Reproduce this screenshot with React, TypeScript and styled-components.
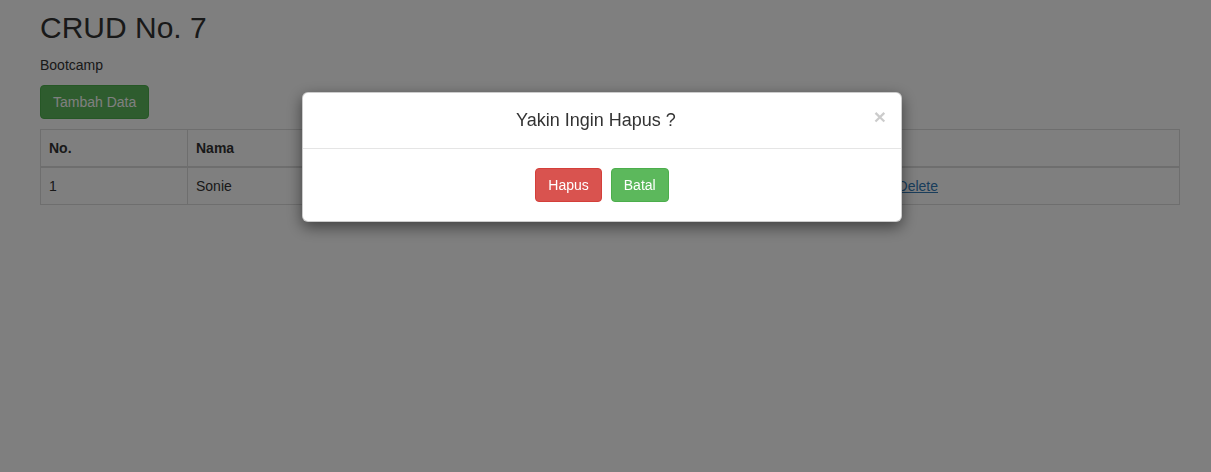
import React from "react";
import styled, { createGlobalStyle } from "styled-components";

const Global = createGlobalStyle`
  html, body { margin: 0; padding: 0; }
  body {
    font-family: "Liberation Sans", Arial, Helvetica, sans-serif;
    font-size: 14px;
    line-height: 1.42857143;
    color: #333;
    background: #fff;
  }
  * { box-sizing: border-box; }
`;

const Container = styled.div`
  width: 1140px;
  margin-left: 40px;
`;

const Title = styled.h1`
  font-size: 30px;
  font-weight: 500;
  line-height: 33px;
  margin: 11px 0 11px;
`;

const Sub = styled.p`
  margin: 0 0 10px;
`;

const Btn = styled.button<{ $variant: "success" | "danger" }>`
  display: inline-block;
  font-family: inherit;
  font-size: 14px;
  line-height: 20px;
  padding: 6px 12px;
  border-radius: 4px;
  border: 1px solid ${(p) => (p.$variant === "success" ? "#4cae4c" : "#d43f3a")};
  background: ${(p) => (p.$variant === "success" ? "#5cb85c" : "#d9534f")};
  color: #fff;
  cursor: pointer;
`;

const Table = styled.table`
  width: 100%;
  margin-top: 10px;
  border-collapse: collapse;
  border: 1px solid #ddd;
  th, td {
    border: 1px solid #ddd;
    padding: 8px;
    text-align: left;
    line-height: 1.42857143;
    vertical-align: top;
  }
  th { border-bottom-width: 2px; font-weight: bold; }
`;

const Link = styled.a`
  color: #337ab7;
  text-decoration: underline;
`;

const Backdrop = styled.div`
  position: fixed;
  inset: 0;
  background: rgba(0, 0, 0, 0.5);
`;

const Overlay = styled.div`
  position: fixed;
  inset: 0;
  display: flex;
  justify-content: center;
  align-items: flex-start;
  padding-top: 92px;
  padding-right: 7px;
`;

const Dialog = styled.div`
  width: 600px;
  background: #fff;
  border: 1px solid rgba(0, 0, 0, 0.2);
  border-radius: 6px;
  box-shadow: 0 5px 15px rgba(0, 0, 0, 0.5);
`;

const Header = styled.div`
  display: flex;
  align-items: flex-start;
  padding: 15px;
  border-bottom: 1px solid #e5e5e5;
`;

const ModalTitle = styled.h4`
  flex: 1;
  margin: 0;
  font-size: 18px;
  font-weight: 500;
  line-height: 25px;
  text-align: center;
`;

const Close = styled.button`
  margin-top: -2px;
  padding: 0;
  border: 0;
  background: transparent;
  font-family: inherit;
  font-size: 21px;
  font-weight: bold;
  line-height: 1;
  color: #000;
  opacity: 0.2;
  cursor: pointer;
`;

const Body = styled.div`
  padding: 19px 15px 19px;
  display: flex;
  justify-content: center;
  gap: 9px;
`;

export default function App() {
  return (
    <>
      <Global />
      <Container>
        <Title>CRUD No. 7</Title>
        <Sub>Bootcamp</Sub>
        <Btn $variant="success">Tambah Data</Btn>
        <Table>
          <thead>
            <tr>
              <th style={{ width: 147 }}>No.</th>
              <th style={{ width: 300 }}>Nama</th>
              <th style={{ width: 366 }}>Alamat</th>
              <th>Aksi</th>
            </tr>
          </thead>
          <tbody>
            <tr>
              <td>1</td>
              <td>Sonie</td>
              <td>Jakarta</td>
              <td>
                <Link href="#">Edit</Link> | <Link href="#">Delete</Link>
              </td>
            </tr>
          </tbody>
        </Table>
      </Container>
      <Backdrop />
      <Overlay>
        <Dialog>
          <Header>
            <ModalTitle>Yakin Ingin Hapus ?</ModalTitle>
            <Close>×</Close>
          </Header>
          <Body>
            <Btn $variant="danger">Hapus</Btn>
            <Btn $variant="success">Batal</Btn>
          </Body>
        </Dialog>
      </Overlay>
    </>
  );
}
